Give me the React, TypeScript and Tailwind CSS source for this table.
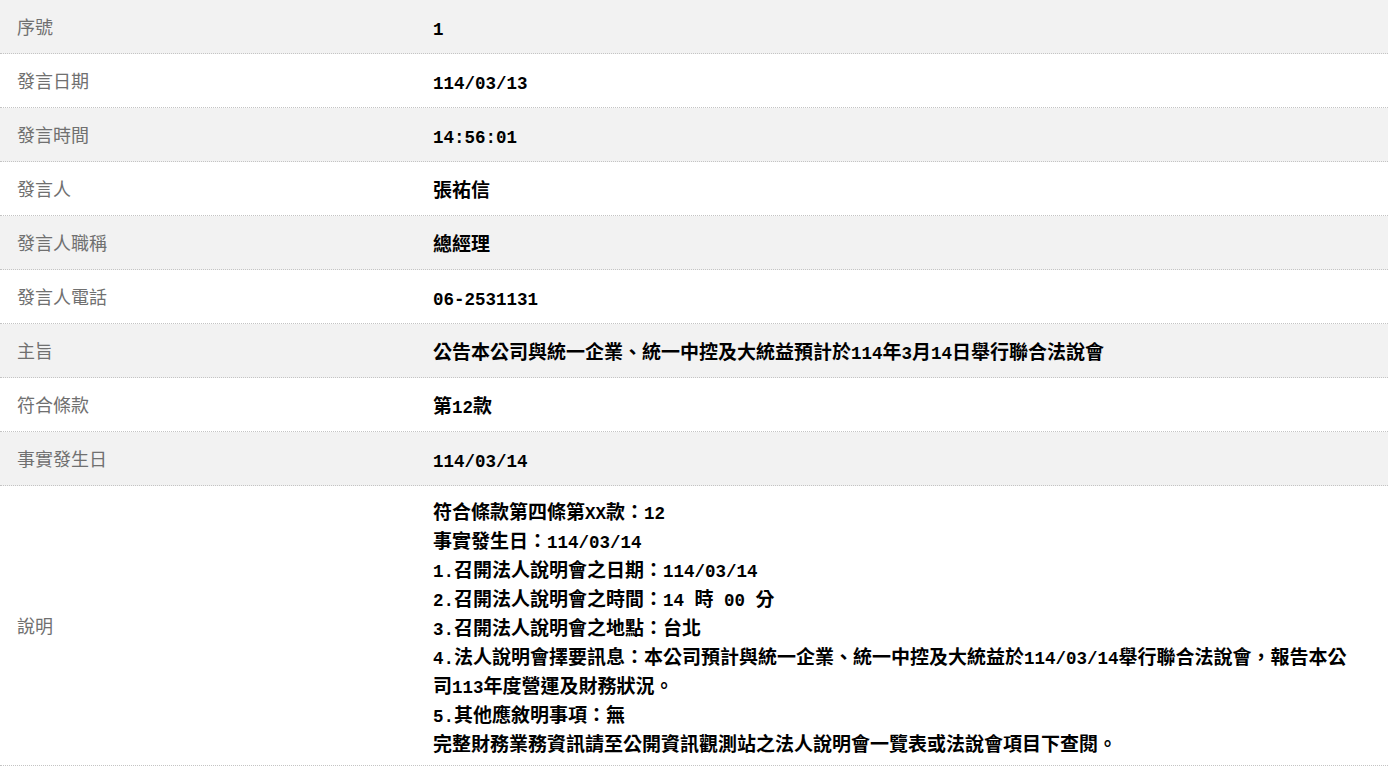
import React from "react";

function Mixed({ text }: { text: string }) {
  const parts = text.split(/([\x20-\x7E]+)/).filter((p) => p.length > 0);
  return (
    <>
      {parts.map((p, i) =>
        /^[\x20-\x7E]+$/.test(p) ? (
          <span
            key={i}
            className="font-['Liberation_Mono',monospace] text-[17.5px] leading-none font-bold whitespace-pre"
          >
            {p}
          </span>
        ) : (
          <span key={i}>{p}</span>
        )
      )}
    </>
  );
}

const rows: { label: string; value: string }[] = [
  { label: "序號", value: "1" },
  { label: "發言日期", value: "114/03/13" },
  { label: "發言時間", value: "14:56:01" },
  { label: "發言人", value: "張祐信" },
  { label: "發言人職稱", value: "總經理" },
  { label: "發言人電話", value: "06-2531131" },
  { label: "主旨", value: "公告本公司與統一企業、統一中控及大統益預計於114年3月14日舉行聯合法說會" },
  { label: "符合條款", value: "第12款" },
  { label: "事實發生日", value: "114/03/14" },
];

const desc: string[] = [
  "符合條款第四條第XX款：12",
  "事實發生日：114/03/14",
  "1.召開法人說明會之日期：114/03/14",
  "2.召開法人說明會之時間：14 時 00 分",
  "3.召開法人說明會之地點：台北",
  "4.法人說明會擇要訊息：本公司預計與統一企業、統一中控及大統益於114/03/14舉行聯合法說會，報告本公",
  "司113年度營運及財務狀況。",
  "5.其他應敘明事項：無",
  "完整財務業務資訊請至公開資訊觀測站之法人說明會一覽表或法說會項目下查閱。",
];

export default function App() {
  return (
    <div lang="zh-TW" className="w-[1388px] bg-white font-['Noto_Sans_CJK_TC',sans-serif]">
      {rows.map((r, i) => (
        <div
          key={i}
          className={
            "grid h-[54px] grid-cols-[416px_1fr] border-b border-dotted border-[#c4c4c4] " +
            (i % 2 === 0 ? "bg-[#f2f2f2]" : "bg-white")
          }
        >
          <div className="flex items-center px-[17px] text-[18px] leading-[29px] text-[#707070]">
            {r.label}
          </div>
          <div className="flex items-center px-[17px] text-[19px] leading-[29px] font-bold text-black whitespace-nowrap">
            <div className="-mt-px">
              <Mixed text={r.value} />
            </div>
          </div>
        </div>
      ))}
      <div className="grid grid-cols-[416px_1fr] border-b border-dotted border-[#c4c4c4] bg-white">
        <div className="flex items-center px-[17px] text-[18px] leading-[29px] text-[#707070]">
          說明
        </div>
        <div className="px-[17px] pt-[10px] pb-[8px] text-[19px] leading-[29px] font-bold text-black">
          {desc.map((d, i) => (
            <div key={i} className="h-[29px] whitespace-nowrap">
              <Mixed text={d} />
            </div>
          ))}
        </div>
      </div>
    </div>
  );
}
